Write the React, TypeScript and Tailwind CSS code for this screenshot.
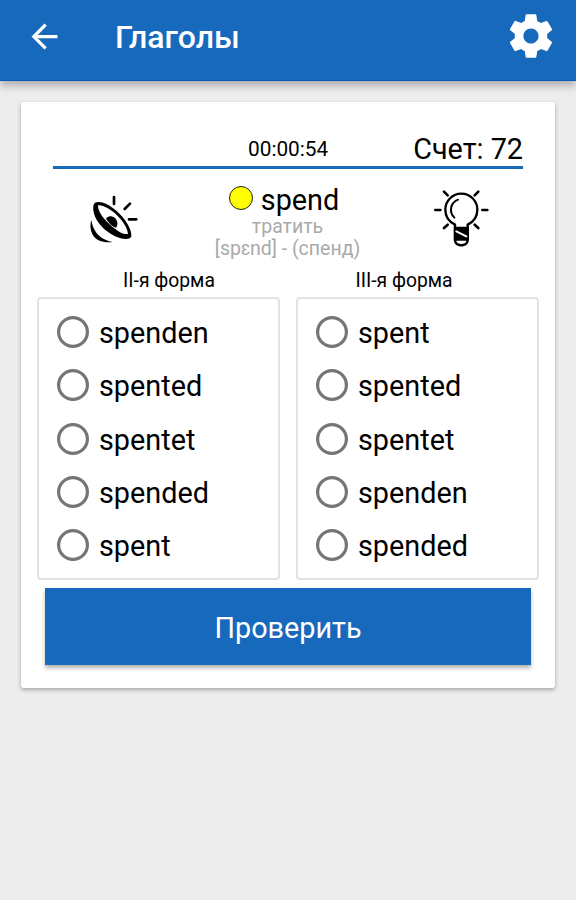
const secondForms = ['spenden', 'spented', 'spentet', 'spended', 'spent'];
const thirdForms = ['spent', 'spented', 'spentet', 'spenden', 'spended'];

function BackArrow() {
  return (
    <svg viewBox="0 0 24 24" className="size-[39px]" fill="#fff">
      <path d="M20 11H7.83l5.59-5.59L12 4l-8 8 8 8 1.41-1.41L7.83 13H20v-2z" />
    </svg>
  );
}

function Gear() {
  return (
    <svg viewBox="0 0 24 24" className="size-[52px]" fill="#fff">
      <path d="M19.43 12.98c.04-.32.07-.64.07-.98s-.03-.66-.07-.98l2.11-1.65c.19-.15.24-.42.12-.64l-2-3.46c-.12-.22-.39-.3-.61-.22l-2.49 1c-.52-.4-1.08-.73-1.69-.98l-.38-2.65C14.46 2.18 14.25 2 14 2h-4c-.25 0-.46.18-.49.42l-.38 2.65c-.61.25-1.17.59-1.69.98l-2.49-1c-.23-.09-.49 0-.61.22l-2 3.46c-.13.22-.07.49.12.64l2.11 1.65c-.04.32-.07.65-.07.98s.03.66.07.98l-2.11 1.65c-.19.15-.24.42-.12.64l2 3.46c.12.22.39.3.61.22l2.49-1c.52.4 1.08.73 1.69.98l.38 2.65c.03.24.24.42.49.42h4c.25 0 .46-.18.49-.42l.38-2.65c.61-.25 1.17-.59 1.69-.98l2.49 1c.23.09.49 0 .61-.22l2-3.46c.12-.22.07-.49-.12-.64l-2.11-1.65zM12 15.5c-1.93 0-3.5-1.57-3.5-3.5s1.57-3.5 3.5-3.5 3.5 1.57 3.5 3.5-1.57 3.5-3.5 3.5z" />
    </svg>
  );
}

function Speaker() {
  return (
    <svg viewBox="0 0 210 210" className="size-[70px]">
      <path d="M34 105C29 121 31 141 42 155C54 169 76 174 98 171C78 167 60 157 49 143C40 131 36 118 34 105Z" fill="#000" />
      <path d="M45 53C59 46 84 55 110 78C138 103 156 135 154 154C151 167 121 164 93 147C63 129 43 102 40 76C39 65 40 57 45 53Z" fill="#000" />
      <path d="M54 61C68 59 88 70 107 87C128 106 143 130 144 147C131 149 115 140 97 125C72 105 53 80 54 61Z" fill="#fff" />
      <path d="M78 101C82 92 95 91 104 98C113 106 115 118 108 128C96 124 86 114 78 101Z" fill="#000" />
      <path d="M102 36V57M150 56L134 72M147 103H169" stroke="#000" strokeWidth="8" strokeLinecap="round" />
    </svg>
  );
}

function Bulb() {
  return (
    <svg viewBox="0 0 210 225" className="h-[75px] w-[70px]" fill="none" stroke="#000" strokeWidth="7" strokeLinecap="round">
      <path d="M90 142V134C72 125 61 109 61 89C61 62 83 41 109 41S157 62 157 89C157 109 146 125 128 134V142" />
      <path d="M99 59C76 68 71 96 88 113" strokeWidth="6" />
      <path d="M86 140H132V178C132 207 86 207 86 178Z" fill="#000" stroke="none" />
      <path d="M94 182H124C124 195 94 195 94 182Z" fill="#fff" stroke="none" />
      <path d="M94 154L124 169" stroke="#fff" strokeWidth="6" />
      <path d="M57 35L68 46M160 35L149 46M31 90H46M172 90H187M57 144L68 134M160 144L149 134" strokeWidth="8" />
    </svg>
  );
}

function FormColumn({ title, titleInset, options }: { title: string; titleInset: string; options: string[] }) {
  return (
    <section className="w-[243px]">
      <h2 className={`h-[28px] pt-px text-center text-[19.3px] leading-[22px] ${titleInset}`}>{title}</h2>
      <div className="h-[283px] rounded-[4px] border-2 border-[#e2e2e2] pt-[6px] pl-[18px]">
        {options.map((option) => (
          <label key={option} className="flex h-[53.4px] items-center">
            <svg viewBox="0 0 32 32" className="mt-[0.4px] size-8" fill="none">
              <circle cx="16" cy="16" r="14.4" stroke="#757575" strokeWidth="3.2" />
            </svg>
            <span className="ml-[10px] pt-[2.4px] text-[28.8px] leading-8">{option}</span>
          </label>
        ))}
      </div>
    </section>
  );
}

export default function App() {
  return (
    <div className="h-[900px] w-[576px] overflow-hidden bg-[#ededed] font-[Roboto,sans-serif] text-black">
      <header className="flex h-[81px] items-center border-b border-[#0d5bb0] bg-[#1769bb] pr-[19px] pb-[8px] pl-[25px] shadow-[0_4px_9px_rgba(0,0,0,0.3)]">
        <BackArrow />
        <h1 className="ml-[51px] flex-1 pt-[2px] text-[32px] leading-10 font-medium text-white">Глаголы</h1>
        <Gear />
      </header>

      <main className="mt-[21px] ml-[21px] h-[586px] w-[534px] rounded-[3px] bg-white px-4 pt-[27px] shadow-[0_2px_4px_rgba(0,0,0,0.3)]">
        <div className="ml-4 flex h-10 w-[470px] items-center justify-between border-b-[3px] border-[#1769bb]">
          <span className="ml-[195px] pt-[4px] text-[20.8px]">00:00:54</span>
          <span className="pt-[4px] text-[28.8px]">Счет: 72</span>
        </div>

        <div className="flex h-[100px] pt-[16px]">
          <div className="ml-[43px] w-[70px]"><Speaker /></div>
          <div className="-mt-px flex w-[275px] flex-col items-center">
            <div className="mr-[7px] flex h-[30px] items-center gap-2">
              <span className="-mt-[3px] size-6 rounded-full border border-[#222] bg-[#ffff00]" />
              <span className="pt-[2px] text-[28.8px] leading-[30px]">spend</span>
            </div>
            <span className="mt-[2px] text-[19.5px] leading-[22px] text-[#aaa]">тратить</span>
            <span className="text-[19.5px] leading-[22px] whitespace-nowrap text-[#aaa]">[spɛnd] - (спенд)</span>
          </div>
          <div className="-mt-[5px] w-[70px]"><Bulb /></div>
        </div>

        <div className="flex w-[502px] justify-between">
          <FormColumn title="II-я форма" titleInset="pl-[21px]" options={secondForms} />
          <FormColumn title="III-я форма" titleInset="pr-[27px]" options={thirdForms} />
        </div>

        <button className="mt-2 ml-2 h-[77px] w-[486px] bg-[#1769bb] pt-[4px] text-[28.8px] text-white shadow-[0_3px_4px_rgba(0,0,0,0.3)]">
          Проверить
        </button>
      </main>
    </div>
  );
}
